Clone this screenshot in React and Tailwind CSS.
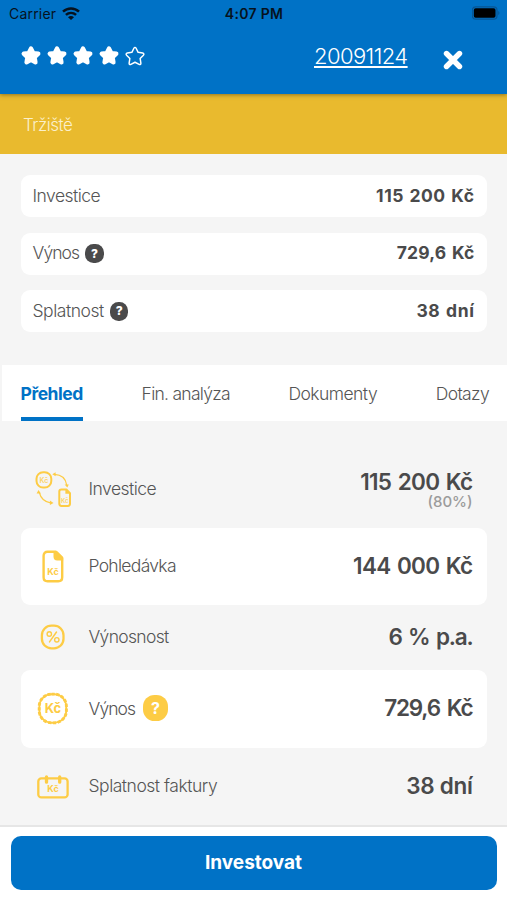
import React from "react";

const STAR =
  "M12 3.700l2.500 5 5.500.8-4 3.900.9 5.500-4.900-2.600-4.900 2.600.9-5.500-4-3.900 5.500-.8z";
const STAR_OUTLINE =
  "M12 2.600c.5 0 .9.300 1.200.9l2.200 4.500 5 .8c1.300.2 1.700 1.500.8 2.300l-3.600 3.600.8 5c.2 1.300-.8 2-1.900 1.400L12 18.800l-4.500 2.300c-1.100.6-2.100-.1-1.900-1.400l.8-5-3.600-3.600c-.9-.8-.5-2.100.8-2.300l5-.8 2.200-4.500c.3-.6.7-.9 1.200-.9z";

function Star({ filled }) {
  return (
    <svg viewBox="0 0 24 24" className="h-[22px] w-[22px]">
      {filled ? (
        <path d={STAR} fill="#fff" stroke="#fff" strokeWidth="4.600" strokeLinejoin="round" />
      ) : (
        <path d={STAR_OUTLINE} fill="none" stroke="#fff" strokeWidth="1.600" strokeLinejoin="round" />
      )}
    </svg>
  );
}

function Wifi() {
  return (
    <svg viewBox="0 0 18 13" className="-mt-px h-[13px] w-[18px]" fill="none" stroke="#06121e" strokeWidth="2.500">
      <path d="M1 4.700C5.500.4 12.500.4 17 4.700" />
      <path d="M3.900 7.900c3-2.700 7.200-2.700 10.200 0" />
      <path d="M6 10.200c1.800-1.600 4.200-1.600 6 0l-3 2.800z" fill="#06121e" stroke="none" />
    </svg>
  );
}

function Battery() {
  return (
    <svg viewBox="0 0 30 14" className="-mt-px h-[14px] w-[30px]">
      <rect x="0.300" y="0.800" width="24.700" height="12.400" rx="3.500" fill="none" stroke="#075694" strokeWidth="1.200" />
      <rect x="1.800" y="2.300" width="21.700" height="9.400" rx="1.800" fill="#000" />
      <path d="M26.300 5v4c1.500-.5 1.500-3.500 0-4z" fill="#075694" />
    </svg>
  );
}

function Kc({ x, y, size, weight = 700, opacity = 1 }) {
  return (
    <text
      x={x}
      y={y}
      fontSize={size}
      fontWeight={weight}
      opacity={opacity}
      textAnchor="middle"
      fill="#fdcc45"
      stroke="none"
    >
      Kč
    </text>
  );
}

function ExchangeIcon() {
  return (
    <svg viewBox="0 0 40 40" className="h-10 w-10" fill="none" stroke="#fdcc45">
      <rect x="4.500" y="2.200" width="14.800" height="15.400" rx="6.600" strokeWidth="2" />
      <Kc x={11.900} y={12.700} size={7} weight={600} opacity={0.8} />
      <path d="M27.300 21.600c0-1.200.9-2.100 2.100-2.100h5l3.600 3.600v10.700c0 1.200-.9 2.100-2.100 2.100h-6.500c-1.200 0-2.100-.9-2.100-2.100z" strokeWidth="2" strokeLinejoin="round" />
      <path d="M33.400 19v4.700h5z" fill="#fdcc45" stroke="none" />
      <Kc x={32.800} y={32.700} size={6} weight={600} opacity={0.8} />
      <path d="M22.500 4.300c6.500.3 11.200 4 12.200 10.700M7.300 22.500c1.500 6 5.300 9.300 11.200 10.300" strokeWidth="1.200" />
      <path d="M20.300 4.300l3.300-2v4zM35.300 17.600l-2.700-3.200h4.200zM6.500 19.900l-1.900 3.500h4.300zM21.500 33l-3.600-2.400v4.400z" fill="#fdcc45" stroke="none" />
    </svg>
  );
}

function DocumentIcon() {
  return (
    <svg viewBox="0 0 40 40" className="h-10 w-10" fill="none" stroke="#fdcc45">
      <path d="M15.500 4.800h8.500l6.200 6.200v19.200c0 2.400-1.500 4-3.900 4H15.500c-2.400 0-3.900-1.600-3.900-4V8.800c0-2.400 1.500-4 3.900-4z" strokeWidth="2.400" strokeLinejoin="round" />
      <path d="M21.500 4.400v5.300c0 2.300 1.300 3.700 3.600 3.700h6v-3.400l-5.600-5.600z" fill="#fdcc45" stroke="none" />
      <Kc x={21} y={28.200} size={9} />
    </svg>
  );
}

function PercentIcon() {
  return (
    <svg viewBox="0 0 40 40" className="h-10 w-10" fill="none" stroke="#fdcc45">
      <rect x="9.900" y="7.700" width="21.600" height="22.600" rx="9.500" strokeWidth="2.300" />
      <circle cx="17.300" cy="16" r="2.200" strokeWidth="1.400" />
      <circle cx="24.800" cy="21.800" r="2.200" strokeWidth="1.400" />
      <path d="M24.500 14l-7 9.900" strokeWidth="1.500" strokeLinecap="round" />
    </svg>
  );
}

function CoinIcon() {
  return (
    <svg viewBox="0 0 40 40" className="h-10 w-10" fill="none" stroke="#fdcc45">
      <rect x="7.400" y="5.300" width="26.800" height="28.400" rx="12" strokeWidth="1.900" />
      <rect
        x="7.200"
        y="5.100"
        width="27.200"
        height="28.800"
        rx="12.300"
        strokeWidth="2.900"
        strokeDasharray="3.200 1.600"
      />
      <Kc x={20.900} y={24.200} size={13} />
    </svg>
  );
}

function CalendarIcon() {
  return (
    <svg viewBox="0 0 40 40" className="h-10 w-10" fill="none" stroke="#fdcc45">
      <rect x="6.300" y="11.400" width="29.300" height="19" rx="3" strokeWidth="2.300" />
      <path d="M14.500 9.900v5.300M27.700 9.900v5.300" strokeWidth="3.300" strokeLinecap="round" />
      <Kc x={21} y={25.200} size={9} />
    </svg>
  );
}

function SummaryCard({ label, help, value, labelClass, valueClass }) {
  return (
    <div className="flex h-[42px] items-center justify-between rounded-[9px] bg-white pr-[12px] pl-[12px]">
      <div className="flex items-center">
        <span className={"text-[17.500px] font-light text-[#555] " + labelClass}>{label}</span>
        {help && (
          <span className="ml-[6px] flex h-[19px] w-[18.500px] items-center justify-center rounded-[8.500px] bg-[#4a4a4b] text-[12px] font-extrabold text-white">
            ?
          </span>
        )}
      </div>
      <span className={"text-[17.500px] font-bold text-[#4a4a4b] " + valueClass}>{value}</span>
    </div>
  );
}

function DetailRow({ icon, label, help, value, note, className, labelClass, valueClass }) {
  return (
    <div className={"flex shrink-0 items-center rounded-[9px] pr-[14px] pl-[11px] " + className}>
      {icon}
      <div className="ml-[17px] flex flex-1 items-center">
        <span className={"text-[17.500px] font-light text-[#555] " + labelClass}>{label}</span>
        {help && (
          <span className="-mt-[3px] ml-[8px] flex h-[26px] w-[24.500px] items-center justify-center rounded-[11.500px] bg-[#fdcc45] text-[16px] font-bold text-white">
            ?
          </span>
        )}
      </div>
      <div className="flex flex-col items-end">
        <span className={"text-[22.500px] font-semibold text-[#4a4a4b] " + valueClass}>{value}</span>
        {note && (
          <span className="text-[15px] leading-[15px] font-medium text-[#9b9b9b]">
            {note}
          </span>
        )}
      </div>
    </div>
  );
}

export default function App() {
  return (
    <div className="flex h-[900px] w-[507px] flex-col overflow-hidden bg-[#f5f5f5] font-['Inter','Noto_Sans',sans-serif] whitespace-nowrap">
      <header className="relative z-10 h-[94px] shrink-0 bg-[#0072c6] shadow-[0_1px_4px_rgba(70,60,20,0.55)]">
        <div className="grid h-[27px] grid-cols-3 items-center pr-[5px] pl-[9px] text-[14px] text-[#06121e]">
          <div className="flex items-center gap-[6px]">
            <span className="tracking-[0.200px]">Carrier</span>
            <Wifi />
          </div>
          <span className="-ml-[3px] text-center font-semibold tracking-[0.300px]">4:07 PM</span>
          <div className="flex justify-end">
            <Battery />
          </div>
        </div>
        <div className="flex h-[58px] items-center pl-[20px] text-white">
          <div className="flex gap-[4px]">
            <Star filled />
            <Star filled />
            <Star filled />
            <Star filled />
            <Star />
          </div>
          <a className="ml-[168px] w-[94px] text-[22px] font-light tracking-[-0.580px] underline decoration-[1.500px] underline-offset-[2px]">
            20091124
          </a>
          <svg viewBox="0 0 20 20" className="mt-[7px] ml-[35px] h-5 w-5" stroke="#fff" strokeWidth="5.400" strokeLinecap="round">
            <path d="M3.500 3.500l13 13M16.500 3.500l-13 13" />
          </svg>
        </div>
      </header>

      <div className="flex h-[60px] shrink-0 items-center bg-[#e9ba2e] pt-[3px] pl-[23px] text-[17px] font-light text-[#fbf0cb]">
        <span className="tracking-[-0.480px]">Tržiště</span>
      </div>

      <section className="flex shrink-0 flex-col gap-[15.500px] px-[20.500px] pt-[21px]">
        <SummaryCard label="Investice" value="115 200 Kč" labelClass="tracking-[-0.520px]" valueClass="tracking-[0.500px] [word-spacing:1px]" />
        <SummaryCard label="Výnos" help value="729,6 Kč" labelClass="tracking-[-0.900px]" valueClass="tracking-[0.150px] [word-spacing:1.500px]" />
        <SummaryCard label="Splatnost" help value="38 dní" labelClass="tracking-[-0.450px]" valueClass="tracking-[0.600px] [word-spacing:1px]" />
      </section>

      <nav className="mt-[33px] ml-[2px] flex h-[56px] shrink-0 justify-between bg-white pr-[18px] pl-[18.500px] text-[17.500px] leading-[57px] font-light text-[#555]">
        <span className="h-[56px] border-b-4 border-[#0072c6] font-bold tracking-[-0.450px] text-[#0072c6]">Přehled</span>
        <span className="tracking-[-0.730px]">Fin. analýza</span>
        <span className="tracking-[-0.550px]">Dokumenty</span>
        <span className="tracking-[-0.650px]">Dotazy</span>
      </nav>

      <section className="flex min-h-0 flex-1 flex-col px-[20.500px] pt-[30px]">
        <DetailRow icon={<ExchangeIcon />} label="Investice" value="115 200 Kč" note="(80%)" className="h-[77px]" labelClass="tracking-[-0.520px]" valueClass="leading-[24px] tracking-[-0.700px] [word-spacing:1.500px]" />
        <DetailRow icon={<DocumentIcon />} label="Pohledávka" value="144 000 Kč" className="h-[77px] bg-white" labelClass="tracking-[-0.700px]" valueClass="-mt-[2px] leading-[26px] tracking-[-0.700px] [word-spacing:1.500px]" />
        <DetailRow icon={<PercentIcon />} label="Výnosnost" value="6 % p.a." className="h-[65px]" labelClass="tracking-[-0.680px]" valueClass="-mt-px leading-[26px] tracking-[-1.200px] [word-spacing:2px]" />
        <DetailRow icon={<CoinIcon />} label="Výnos" help value="729,6 Kč" className="h-[78px] bg-white" labelClass="tracking-[-0.900px]" valueClass="-mt-[2px] leading-[26px] tracking-[-1.200px] [word-spacing:2.500px]" />
        <DetailRow icon={<CalendarIcon />} label="Splatnost faktury" value="38 dní" className="h-[77px]" labelClass="tracking-[-0.480px]" valueClass="-mt-px leading-[26px] tracking-[-0.300px]" />
      </section>

      <footer className="h-[75px] shrink-0 border-t-2 border-[#e6e6e6] bg-white pt-[9px] pr-[10px] pl-[11px]">
        <button className="flex h-[54px] w-full items-center justify-center rounded-[10px] bg-[#0072c6] pt-px pr-px text-[19px] font-bold text-white">
          Investovat
        </button>
      </footer>
    </div>
  );
}
